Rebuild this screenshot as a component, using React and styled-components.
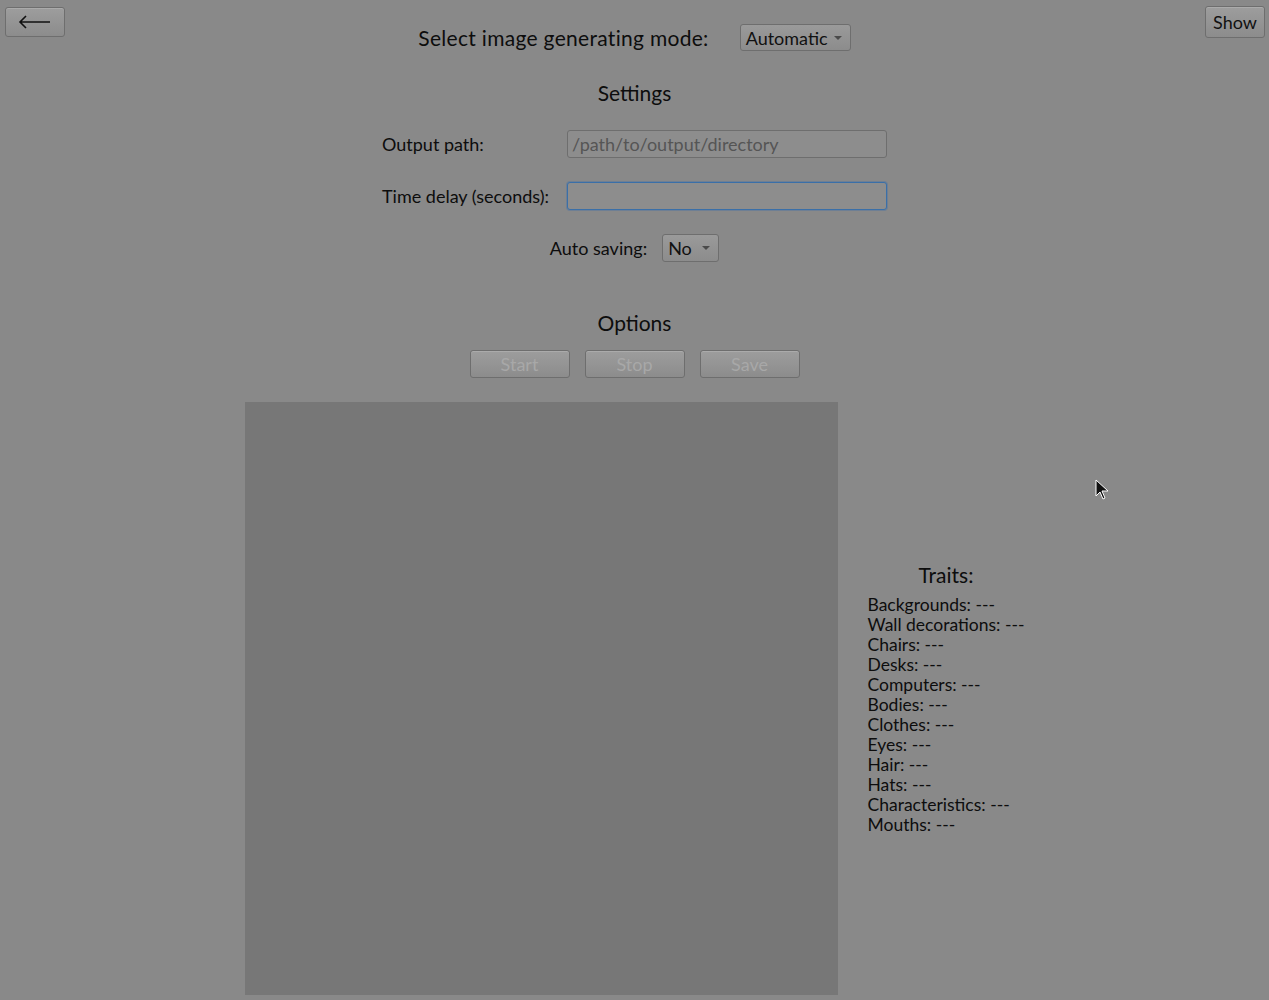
import React from "react";
import styled, { createGlobalStyle } from "styled-components";

const Global = createGlobalStyle`
  html, body { margin: 0; padding: 0; background: #898989; }
  body { font-family: "Lato", "Noto Sans", sans-serif; color: #0d0d0d; }
  #root { min-height: 1000px; }
`;

const Page = styled.div`
  position: relative;
  width: 1269px;
  height: 1000px;
  overflow: hidden;
  background: #898989;
`;

const CornerBar = styled.div`
  display: flex;
  justify-content: space-between;
  align-items: flex-start;
  padding: 6px 4px 0 5px;
  height: 0;
`;

const GrayButton = styled.button`
  box-sizing: border-box;
  width: ${(p) => p.$w || 60}px;
  height: ${(p) => p.$h || 30}px;
  margin-top: ${(p) => p.$mt || 0}px;
  border: 1px solid #6e6e6e;
  border-radius: 3px;
  background: linear-gradient(#9d9d9d, #8c8c8c);
  color: ${(p) => (p.$disabled ? "#a8a8a8" : "#111")};
  font-family: inherit;
  font-size: 18px;
  padding: 0;
  display: flex;
  align-items: center;
  justify-content: center;
  box-shadow: inset 0 1px 0 rgba(255,255,255,0.15);
`;

const Main = styled.div`
  display: flex;
  flex-direction: column;
  align-items: center;
  padding-top: 18px;
`;

const ModeRow = styled.div`
  display: flex;
  align-items: center;
  gap: 31px;
`;

const ModeLabel = styled.span`
  font-size: 21px;
  letter-spacing: 0.3px;
`;

const Select = styled.div`
  box-sizing: border-box;
  height: ${(p) => p.$h || 28}px;
  width: ${(p) => p.$w}px;
  border: 1px solid #6e6e6e;
  border-radius: 3px;
  background: linear-gradient(#9a9a9a, #8c8c8c);
  display: flex;
  align-items: center;
  justify-content: space-between;
  padding: 0 8px 0 5px;
  font-size: 18px;
  color: #111;
`;

const Caret = styled.span`
  width: 0;
  height: 0;
  border-left: 4px solid transparent;
  border-right: 4px solid transparent;
  border-top: 4px solid #4a4a4a;
`;

const SectionTitle = styled.div`
  font-size: 21px;
  margin-top: ${(p) => p.$mt}px;
  line-height: 24px;
`;

const FormRow = styled.div`
  display: flex;
  align-items: center;
  width: 505px;
  margin-top: ${(p) => p.$mt}px;
`;

const FieldLabel = styled.span`
  width: ${(p) => (p.$auto ? "auto" : "185px")};
  font-size: 18px;
`;

const TextInput = styled.div`
  box-sizing: border-box;
  width: 320px;
  height: 28px;
  border: 1px solid ${(p) => (p.$focus ? "#3a6fa8" : "#6e6e6e")};
  border-radius: 3px;
  box-shadow: ${(p) => (p.$focus ? "0 0 0 1px rgba(60,110,170,0.35)" : "none")};
  background: #8d8d8d;
  padding: 0 4px;
  display: flex;
  align-items: center;
  font-size: 18px;
  color: #555;
`;

const AutoRow = styled.div`
  display: flex;
  align-items: center;
  gap: 15px;
  margin-top: 24px;
`;

const ButtonRow = styled.div`
  display: flex;
  gap: 15px;
  margin-top: 15px;
`;

const Content = styled.div`
  display: flex;
  align-items: center;
  margin-top: 24px;
  gap: 30px;
`;

const ImageBox = styled.div`
  width: 593px;
  height: 593px;
  background: #777777;
`;

const Traits = styled.div`
  display: flex;
  flex-direction: column;
`;

const TraitsTitle = styled.div`
  font-size: 21px;
  text-align: center;
  width: 157px;
  margin-bottom: 8px;
  line-height: 24px;
`;

const TraitLine = styled.div`
  font-size: 17.5px;
  line-height: 20px;
  white-space: nowrap;
`;

const Cursor = styled.svg`
  position: absolute;
  left: 1095px;
  top: 479px;
`;

const traits = [
  "Backgrounds",
  "Wall decorations",
  "Chairs",
  "Desks",
  "Computers",
  "Bodies",
  "Clothes",
  "Eyes",
  "Hair",
  "Hats",
  "Characteristics",
  "Mouths",
];

export default function App() {
  return (
    <Page>
      <Global />
      <CornerBar>
        <GrayButton $w={60} $h={30} $mt={1} aria-label="back">
          <svg width="34" height="14" viewBox="0 0 34 14">
            <path d="M2 7H32M8 1L2 7L8 13" fill="none" stroke="#111" strokeWidth="1.6" />
          </svg>
        </GrayButton>
        <GrayButton $w={60} $h={32}>Show</GrayButton>
      </CornerBar>
      <Main>
        <ModeRow>
          <ModeLabel>Select image generating mode:</ModeLabel>
          <Select $w={111} $h={27}>
            Automatic <Caret />
          </Select>
        </ModeRow>
        <SectionTitle $mt={30}>Settings</SectionTitle>
        <FormRow $mt={25}>
          <FieldLabel>Output path:</FieldLabel>
          <TextInput>/path/to/output/directory</TextInput>
        </FormRow>
        <FormRow $mt={24}>
          <FieldLabel>Time delay (seconds):</FieldLabel>
          <TextInput $focus />
        </FormRow>
        <AutoRow>
          <FieldLabel $auto>Auto saving:</FieldLabel>
          <Select $w={57}>
            No <Caret />
          </Select>
        </AutoRow>
        <SectionTitle $mt={49}>Options</SectionTitle>
        <ButtonRow>
          <GrayButton $w={100} $h={28} $disabled>Start</GrayButton>
          <GrayButton $w={100} $h={28} $disabled>Stop</GrayButton>
          <GrayButton $w={100} $h={28} $disabled>Save</GrayButton>
        </ButtonRow>
        <Content>
          <ImageBox />
          <Traits>
            <TraitsTitle>Traits:</TraitsTitle>
            {traits.map((t) => (
              <TraitLine key={t}>{t}: ---</TraitLine>
            ))}
          </Traits>
        </Content>
      </Main>
      <Cursor width="16" height="22" viewBox="0 0 16 22">
        <path d="M1 1V17L5 13L8 20L10 19L7 12H13Z" fill="#111" stroke="#fff" strokeWidth="1" />
      </Cursor>
    </Page>
  );
}
